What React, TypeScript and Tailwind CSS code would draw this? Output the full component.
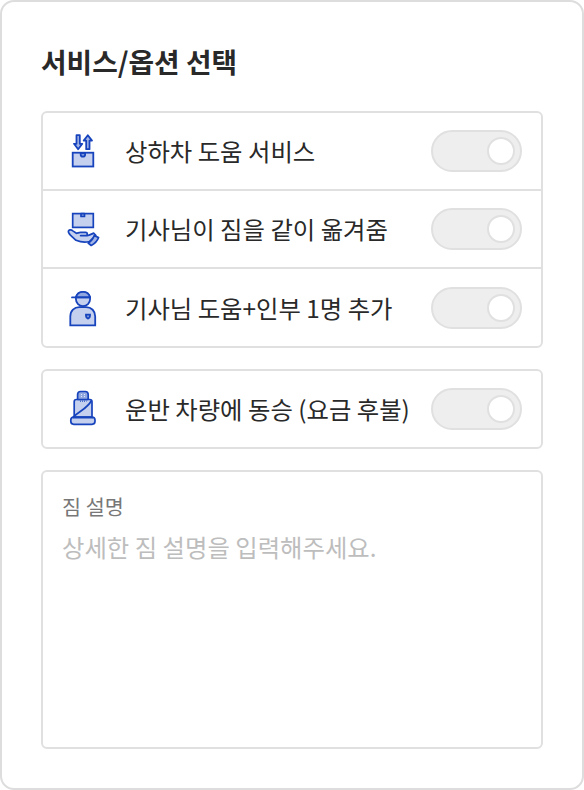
import React, { useState } from 'react';

const LoadIcon = () => (
  <svg viewBox="0 0 50 50" className="-mt-0.5 size-[50px]" fill="#c5d0ee" stroke="#1744bd" strokeWidth="1.8">
    <rect x="12.7" y="27.7" width="20.6" height="13.8" />
    <path d="M20.7 28v1.8q0 1.9 2.2 1.9t2.2-1.900V28z" fill="#7f98db" />
    <g fill="#a3b5e6" strokeLinejoin="round">
      <path d="M16.500 10.200h3.300v8.600h2.500L18.150 24.200 14 18.800h2.500z" />
      <path d="M26.200 24.200h3.300v-8.600H32L27.850 10.200 23.700 15.600h2.500z" />
    </g>
  </svg>
);

const HandIcon = () => (
  <svg viewBox="0 0 50 50" className="-mt-[3px] size-[50px]" fill="#c5d0ee" stroke="#1744bd" strokeWidth="1.7" strokeLinejoin="round" strokeLinecap="round">
    <rect x="12.700" y="10.600" width="20.600" height="13.800" strokeLinejoin="miter" />
    <path d="M21 10.700v2.800h3.500v-2.800z" fill="#7f98db" />
    <path d="M8.500 27.900c1-1.500 3-1 4.300 0l3.600 2.400c1.500 0 2.200-.9 4.100-.9h5.200c2 0 2.200 2.900.2 3.200h-5.300 6.500c2.500-.2 3.900-1.400 6.500-2.500l2.200 2.200-6.400 6.200c-4.600 1.300-9.700.3-13.400-1.200L10.400 32.200c-1.500-1.600-2.500-2.900-1.900-4.300z" />
    <path d="M28.200 40c2.700-1.400 4.900-3.700 6-7.400l4.400 1.900c-1.200 3.400-4 6.200-7.400 8z" fill="#a3b5e6" />
  </svg>
);

const DriverIcon = () => (
  <svg viewBox="0 0 50 50" className="-mt-0.5 size-[50px]" fill="#c5d0ee" stroke="#1744bd" strokeWidth="1.8" strokeLinecap="round">
    <circle cx="23" cy="17" r="7.100" />
    <path d="M16 15.300c.7-3.300 3.300-5.400 7-5.400s6.300 2.100 7 5.400z" fill="#91a7df" />
    <path d="M12 15.400h18" />
    <path d="M10.300 43.300V34.500c0-6 4-9.300 9-9.300h6.700c5.500 0 9.200 3.700 9.200 9.300v8.800z" />
    <path d="M26 32.700h4v1.300q0 2-2 2.600-2-.6-2-2.600z" fill="#7f98db" />
  </svg>
);

const SeatIcon = () => (
  <svg viewBox="0 0 50 50" className="-mt-0.5 size-[50px]" fill="#c5d0ee" stroke="#1744bd" strokeWidth="1.7" strokeLinejoin="round">
    <path d="M14.200 34.200V18.700q0-2.200 2.200-2.200h13.400q2.200 0 2.200 2.200v15.500z" />
    <path d="M18 16.500l-.4-1V11.500q0-3 3-3h4.600q3 0 3 3v4l-.8 1z" fill="#91a7df" />
    <path d="M31.500 17.500c-4.500 8.500-12.500 10.500-18.700 17" fill="none" />
    <rect x="10.800" y="34.100" width="24.200" height="7.200" rx="3" />
    <path d="M13.500 35.500h19M20 18.200h6.500" fill="none" strokeWidth="1" strokeDasharray="1 1" />
    <path d="M21.500 11v4M24.500 11v4" stroke="#e3e9f8" strokeWidth="1" strokeDasharray="1 1" />
  </svg>
);

const Toggle = ({ label }: { label: string }) => {
  const [reversed, setReversed] = useState(false);

  return (
    <button
      type="button"
      aria-label={label}
      onClick={() => setReversed(!reversed)}
      className={`flex h-[42px] w-[91px] shrink-0 items-center rounded-full border-2 border-[#e0e0e0] bg-[#eeeeee] px-[5px] ${reversed ? 'justify-start' : 'justify-end'}`}
    >
      <span className="size-7 rounded-full border-2 border-[#e0e0e0] bg-white" />
    </button>
  );
};

const OptionRow = ({ icon, label }: { icon: React.ReactNode; label: string }) => (
  <div className="flex h-full items-center pr-[19px] pl-[17px]">
    {icon}
    <span className="ml-[15px] flex-1 text-[24.36px] leading-9 whitespace-nowrap">{label}</span>
    <Toggle label={label} />
  </div>
);

const App = () => {
  return (
    <main className="h-[790px] w-[584px] rounded-[14px] border-2 border-[#dddddd] bg-white px-[39px] pt-[39px] font-['Noto_Sans_CJK_KR',sans-serif] text-[#292929]">
      <h1 className="text-[27.8px] leading-10 font-bold">서비스/옵션 선택</h1>

      <section className="mt-[30px] grid h-[237px] grid-rows-[78px_78px_1fr] divide-y-2 divide-[#e0e0e0] rounded-md border-2 border-[#e0e0e0]">
        <OptionRow icon={<LoadIcon />} label="상하차 도움 서비스" />
        <OptionRow icon={<HandIcon />} label="기사님이 짐을 같이 옮겨줌" />
        <OptionRow icon={<DriverIcon />} label="기사님 도움+인부 1명 추가" />
      </section>

      <section className="mt-[21px] h-20 rounded-md border-2 border-[#e0e0e0]">
        <OptionRow icon={<SeatIcon />} label="운반 차량에 동승 (요금 후불)" />
      </section>

      <label className="mt-[21px] flex h-[279px] flex-col rounded-md border-2 border-[#e0e0e0] px-[19px] pt-[19px]">
        <span className="text-[20.7px] leading-[30px] text-[#777777]">짐 설명</span>
        <textarea
          placeholder="상세한 짐 설명을 입력해주세요."
          className="mt-2 flex-1 resize-none text-[24.36px] leading-9 outline-none placeholder:text-[#bdbdbd]"
        />
      </label>
    </main>
  );
};

export default App;
